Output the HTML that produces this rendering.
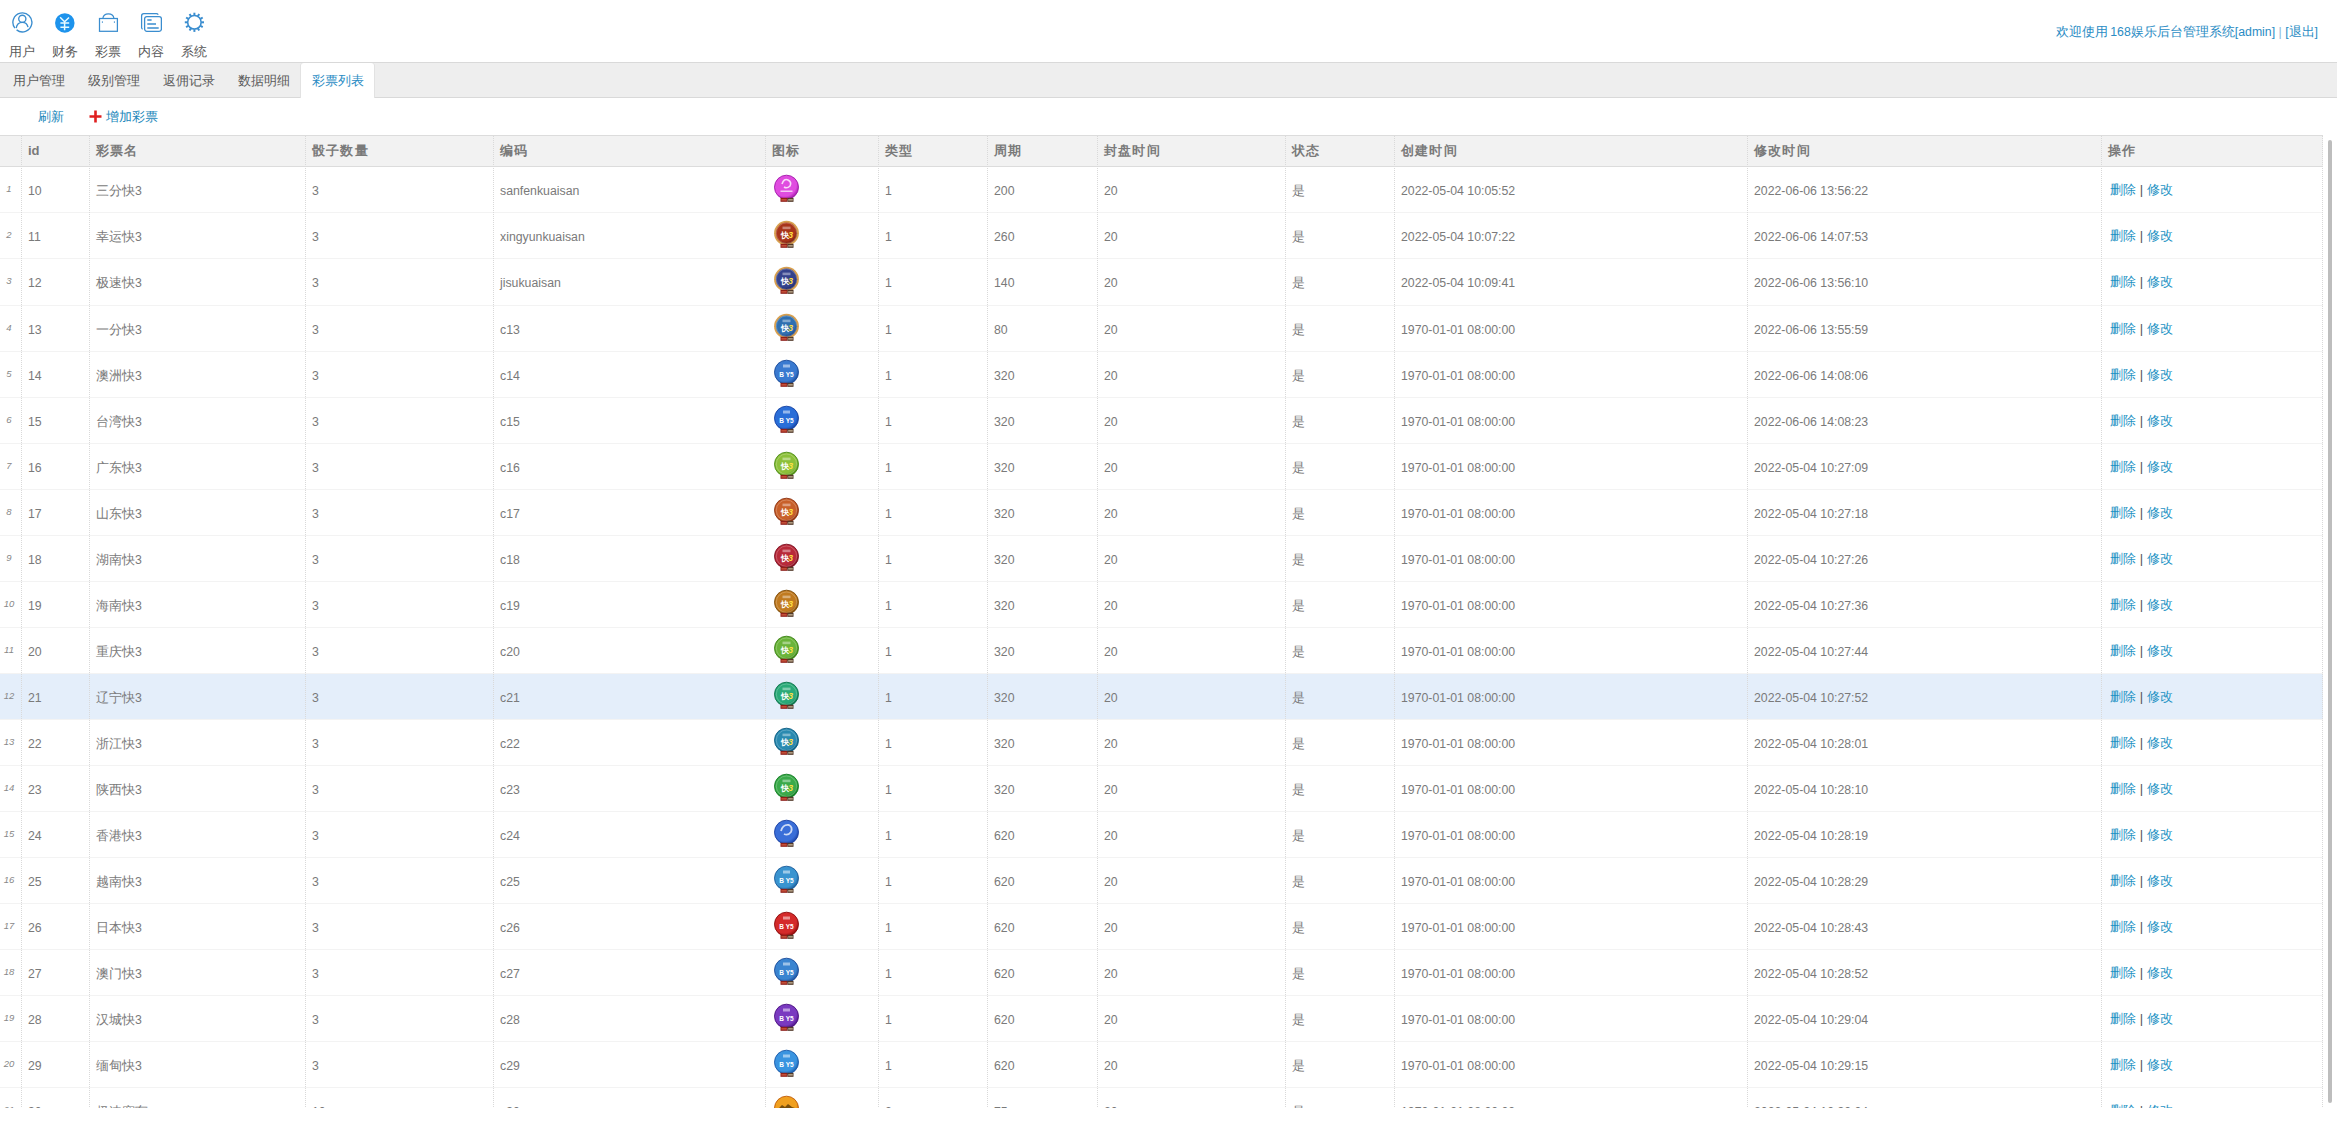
<!DOCTYPE html><html><head><meta charset="utf-8"><style>
*{margin:0;padding:0;box-sizing:border-box}
html,body{width:2337px;height:1140px;overflow:hidden;background:#fff}
body{position:relative;font-family:"Liberation Sans",sans-serif;color:#666;font-size:12px}
.a{position:absolute;white-space:nowrap}
.nav{position:absolute;top:0;width:40px;height:62px}
.nav svg{position:absolute;left:9px;top:12px}
.nav span{position:absolute;left:0;width:40px;top:44px;text-align:center;font-size:13px;color:#5a5a5a;line-height:16px}
#welcome{right:19px;top:24px;font-size:12.3px;color:#2a8cc4;line-height:16px}
#tabs{position:absolute;left:0;top:62px;width:2337px;height:36px;background:#eee;border-top:1px solid #d9d9d9;border-bottom:1px solid #d9d9d9}
.tab{position:absolute;top:10px;font-size:13px;color:#5a5a5a;line-height:16px}
#seltab{position:absolute;left:301px;top:0;width:73px;height:35px;background:#fff;border-radius:3px 3px 0 0;box-shadow:-1px 0 0 #e2e2e2,1px 0 0 #e2e2e2}
.lnk{color:#2288bb;font-size:13px;line-height:16px}
#grid{position:absolute;left:0;top:0;width:2337px;height:1108px;overflow:hidden}
.hd{position:absolute;left:0;width:2323px;background:#f2f2f2;border-top:1px solid #dcdcdc;border-bottom:1px solid #dcdcdc}
.rl{position:absolute;left:0;width:2323px;height:1px;background:#f3f3f3}
.vl{position:absolute;width:0;border-left:1px dotted #d9d9d9}
.ht{position:absolute;font-weight:bold;font-size:13px;color:#7a7a7a;line-height:16px}
.ct{position:absolute;font-size:12.3px;color:#7a7a7a;line-height:16px}
.rn{position:absolute;left:0;width:18px;text-align:center;font-style:italic;font-size:9.5px;color:#888;line-height:12px}
.op{position:absolute;font-size:13px;color:#1d92c4;line-height:16px}
.op i{font-style:normal;color:#555}
b.z{font-weight:normal;font-size:13px}
.ht b.z{font-weight:bold;letter-spacing:1.2px}
#sb{position:absolute;left:2328px;top:140px;width:4px;height:963px;background:#bdbdbd;border-radius:2px}
</style></head><body>
<div class="nav" style="left:2px"><svg width="22" height="22" viewBox="0 0 22 22"><path d="M5.6 17.9 A9.5 9.5 0 1 0 3.9 16.2" fill="none" stroke="#3a8dcf" stroke-width="1.35"/><circle cx="11.3" cy="6.8" r="3.6" fill="none" stroke="#3a8dcf" stroke-width="1.35"/><path d="M5.2 16.2 C5.8 12.6 8.2 10.4 11.3 10.4 C14.4 10.4 16.4 12.4 17 15.2" fill="none" stroke="#3a8dcf" stroke-width="1.35"/></svg><span>用户</span></div>
<div class="nav" style="left:45px"><svg width="22" height="22" viewBox="0 0 22 22"><circle cx="10.8" cy="10.9" r="9.75" fill="#1d93ec"/><path d="M6.1 5.2 L10.6 9.8 L15 5.5 M10.6 9.8 V18.3 M6.4 11.1 H15.2 M6.4 15.2 H15.2" fill="none" stroke="#e8fbff" stroke-width="1.5"/></svg><span>财务</span></div>
<div class="nav" style="left:88px"><svg width="22" height="22" viewBox="0 0 22 22"><rect x="2.5" y="6.5" width="17.9" height="12.8" fill="none" stroke="#3a8dcf" stroke-width="1.25"/><path d="M5.8 6.5 C6.8 0.4 16 0.4 17 6.5" fill="none" stroke="#3a8dcf" stroke-width="1.2"/><rect x="4.9" y="9.3" width="0.9" height="1.6" fill="#3a8dcf"/><rect x="16.9" y="9.3" width="0.9" height="1.6" fill="#3a8dcf"/></svg><span>彩票</span></div>
<div class="nav" style="left:131px"><svg width="22" height="22" viewBox="0 0 22 22"><path d="M2.6 17.2 Q1.6 16.6 1.6 15.5 V3.9 Q1.6 1.7 3.8 1.7 H16.3 Q17.6 1.7 18.3 2.6" fill="none" stroke="#3a8dcf" stroke-width="1.25"/><rect x="4.6" y="4.6" width="16.8" height="14.7" rx="2.2" fill="none" stroke="#3a8dcf" stroke-width="1.3"/><path d="M7.3 7.9 H11.6 M7.3 12 H16 M7.3 15.9 H18.7" stroke="#3a8dcf" stroke-width="1.5"/></svg><span>内容</span></div>
<div class="nav" style="left:174px"><svg width="22" height="22" viewBox="0 0 22 22"><circle cx="11.4" cy="10.3" r="6.75" fill="none" stroke="#3a8dcf" stroke-width="1.6"/><g stroke="#3a8dcf" stroke-width="2"><line x1="11.4" y1="0.7" x2="11.4" y2="3.4" transform="rotate(0 11.4 10.3)"/><line x1="11.4" y1="0.7" x2="11.4" y2="3.4" transform="rotate(30 11.4 10.3)"/><line x1="11.4" y1="0.7" x2="11.4" y2="3.4" transform="rotate(60 11.4 10.3)"/><line x1="11.4" y1="0.7" x2="11.4" y2="3.4" transform="rotate(90 11.4 10.3)"/><line x1="11.4" y1="0.7" x2="11.4" y2="3.4" transform="rotate(120 11.4 10.3)"/><line x1="11.4" y1="0.7" x2="11.4" y2="3.4" transform="rotate(150 11.4 10.3)"/><line x1="11.4" y1="0.7" x2="11.4" y2="3.4" transform="rotate(180 11.4 10.3)"/><line x1="11.4" y1="0.7" x2="11.4" y2="3.4" transform="rotate(210 11.4 10.3)"/><line x1="11.4" y1="0.7" x2="11.4" y2="3.4" transform="rotate(240 11.4 10.3)"/><line x1="11.4" y1="0.7" x2="11.4" y2="3.4" transform="rotate(270 11.4 10.3)"/><line x1="11.4" y1="0.7" x2="11.4" y2="3.4" transform="rotate(300 11.4 10.3)"/><line x1="11.4" y1="0.7" x2="11.4" y2="3.4" transform="rotate(330 11.4 10.3)"/></g></svg><span>系统</span></div>
<div class="a" id="welcome"><b class="z">欢迎使用</b>&#8201;168<b class="z">娱乐后台管理系统</b>[admin] <i style="font-style:normal;color:#8ab8d8">|</i> [<b class="z">退出</b>]</div>
<div id="tabs"><div id="seltab"></div>
<div class="tab" style="left:13px;color:#5a5a5a">用户管理</div>
<div class="tab" style="left:88px;color:#5a5a5a">级别管理</div>
<div class="tab" style="left:163px;color:#5a5a5a">返佣记录</div>
<div class="tab" style="left:238px;color:#5a5a5a">数据明细</div>
<div class="tab" style="left:312px;color:#2a8cc4">彩票列表</div>
</div>
<div class="a lnk" style="left:38px;top:109px">刷新</div>
<svg class="a" style="left:89px;top:110px" width="13" height="13" viewBox="0 0 13 13"><path d="M6.5 0.5 V12.5 M0.5 6.5 H12.5" stroke="#e02020" stroke-width="2.6"/></svg>
<div class="a lnk" style="left:106px;top:109px">增加彩票</div>
<div id="grid">
<div class="hd" style="top:135px;height:32px"></div>
<div class="a" style="left:0;top:674px;width:2323px;height:45px;background:#e4eefa"></div>
<div class="rl" style="top:212px"></div>
<div class="rl" style="top:258px"></div>
<div class="rl" style="top:305px"></div>
<div class="rl" style="top:351px"></div>
<div class="rl" style="top:397px"></div>
<div class="rl" style="top:443px"></div>
<div class="rl" style="top:489px"></div>
<div class="rl" style="top:535px"></div>
<div class="rl" style="top:581px"></div>
<div class="rl" style="top:627px"></div>
<div class="rl" style="top:673px"></div>
<div class="rl" style="top:719px"></div>
<div class="rl" style="top:765px"></div>
<div class="rl" style="top:811px"></div>
<div class="rl" style="top:857px"></div>
<div class="rl" style="top:903px"></div>
<div class="rl" style="top:949px"></div>
<div class="rl" style="top:995px"></div>
<div class="rl" style="top:1041px"></div>
<div class="rl" style="top:1087px"></div>
<div class="rl" style="top:1133px"></div>
<div class="vl" style="left:21px;top:136px;height:973px"></div>
<div class="vl" style="left:89px;top:136px;height:973px"></div>
<div class="vl" style="left:305px;top:136px;height:973px"></div>
<div class="vl" style="left:493px;top:136px;height:973px"></div>
<div class="vl" style="left:765px;top:136px;height:973px"></div>
<div class="vl" style="left:878px;top:136px;height:973px"></div>
<div class="vl" style="left:987px;top:136px;height:973px"></div>
<div class="vl" style="left:1097px;top:136px;height:973px"></div>
<div class="vl" style="left:1285px;top:136px;height:973px"></div>
<div class="vl" style="left:1394px;top:136px;height:973px"></div>
<div class="vl" style="left:1747px;top:136px;height:973px"></div>
<div class="vl" style="left:2101px;top:136px;height:973px"></div>
<div class="vl" style="left:2322px;top:136px;height:973px"></div>
<div class="ht" style="left:28px;top:143px">id</div>
<div class="ht" style="left:96px;top:143px"><b class="z">彩票名</b></div>
<div class="ht" style="left:312px;top:143px"><b class="z">骰子数量</b></div>
<div class="ht" style="left:500px;top:143px"><b class="z">编码</b></div>
<div class="ht" style="left:772px;top:143px"><b class="z">图标</b></div>
<div class="ht" style="left:885px;top:143px"><b class="z">类型</b></div>
<div class="ht" style="left:994px;top:143px"><b class="z">周期</b></div>
<div class="ht" style="left:1104px;top:143px"><b class="z">封盘时间</b></div>
<div class="ht" style="left:1292px;top:143px"><b class="z">状态</b></div>
<div class="ht" style="left:1401px;top:143px"><b class="z">创建时间</b></div>
<div class="ht" style="left:1754px;top:143px"><b class="z">修改时间</b></div>
<div class="ht" style="left:2108px;top:143px"><b class="z">操作</b></div>
<div class="rn" style="top:183px">1</div>
<div class="ct" style="left:28px;top:183px">10</div>
<div class="ct" style="left:96px;top:183px"><b class="z">三分快</b>3</div>
<div class="ct" style="left:312px;top:183px">3</div>
<div class="ct" style="left:500px;top:183px">sanfenkuaisan</div>
<div class="a" style="left:772px;top:174px;line-height:0"><svg width="30" height="30" viewBox="0 0 30 30"><defs><radialGradient id="g0" cx="0.42" cy="0.38" r="0.65"><stop offset="0" stop-color="#e04ce0"/><stop offset="0.75" stop-color="#e04ce0"/><stop offset="1" stop-color="#a018a8"/></radialGradient></defs><circle cx="14.5" cy="13.2" r="12" fill="url(#g0)" stroke="#a018a8" stroke-width="0.9"/><path d="M10 10 Q12 4 16 6 Q20 8 18 12 Q15 15 12 13" fill="none" stroke="#fff" stroke-width="1.6" opacity="0.8"/><rect x="8.5" y="16.5" width="12" height="1.5" fill="#fff" opacity="0.7"/><rect x="8.5" y="23.8" width="7" height="4" fill="#8a1a14"/><rect x="15.5" y="23.8" width="6" height="4" fill="#4a3020"/><rect x="9.3" y="24.9" width="5.4" height="1.8" fill="#e87050" opacity="0.6"/><rect x="16.2" y="24.9" width="4.6" height="1.8" fill="#f0e0c0" opacity="0.6"/></svg></div>
<div class="ct" style="left:885px;top:183px">1</div>
<div class="ct" style="left:994px;top:183px">200</div>
<div class="ct" style="left:1104px;top:183px">20</div>
<div class="ct" style="left:1292px;top:183px"><b class="z">是</b></div>
<div class="ct" style="left:1401px;top:183px">2022-05-04 10:05:52</div>
<div class="ct" style="left:1754px;top:183px">2022-06-06 13:56:22</div>
<div class="op" style="left:2110px;top:182px">删除 <i>|</i> 修改</div>
<div class="rn" style="top:229px">2</div>
<div class="ct" style="left:28px;top:229px">11</div>
<div class="ct" style="left:96px;top:229px"><b class="z">幸运快</b>3</div>
<div class="ct" style="left:312px;top:229px">3</div>
<div class="ct" style="left:500px;top:229px">xingyunkuaisan</div>
<div class="a" style="left:772px;top:220px;line-height:0"><svg width="30" height="30" viewBox="0 0 30 30"><defs><radialGradient id="g1" cx="0.42" cy="0.38" r="0.65"><stop offset="0" stop-color="#a8341a"/><stop offset="0.75" stop-color="#a8341a"/><stop offset="1" stop-color="#6a1a08"/></radialGradient></defs><circle cx="14.5" cy="13.2" r="12.4" fill="#d8a050"/><circle cx="14.5" cy="13.2" r="10.6" fill="url(#g1)"/><rect x="10.5" y="6.6" width="8" height="2.6" fill="#fff" opacity="0.4"/><circle cx="14.5" cy="13.2" r="10.2" fill="none" stroke="#fff" stroke-width="0.5" opacity="0.45"/><text x="9" y="17.6" font-family="Liberation Sans" font-weight="bold" font-size="8" fill="#fff">快</text><text x="16.2" y="18" font-family="Liberation Sans" font-weight="bold" font-style="italic" font-size="8.5" fill="#ffe040">3</text><rect x="8.5" y="23.8" width="7" height="4" fill="#8a1a14"/><rect x="15.5" y="23.8" width="6" height="4" fill="#4a3020"/><rect x="9.3" y="24.9" width="5.4" height="1.8" fill="#e87050" opacity="0.6"/><rect x="16.2" y="24.9" width="4.6" height="1.8" fill="#f0e0c0" opacity="0.6"/></svg></div>
<div class="ct" style="left:885px;top:229px">1</div>
<div class="ct" style="left:994px;top:229px">260</div>
<div class="ct" style="left:1104px;top:229px">20</div>
<div class="ct" style="left:1292px;top:229px"><b class="z">是</b></div>
<div class="ct" style="left:1401px;top:229px">2022-05-04 10:07:22</div>
<div class="ct" style="left:1754px;top:229px">2022-06-06 14:07:53</div>
<div class="op" style="left:2110px;top:228px">删除 <i>|</i> 修改</div>
<div class="rn" style="top:275px">3</div>
<div class="ct" style="left:28px;top:275px">12</div>
<div class="ct" style="left:96px;top:275px"><b class="z">极速快</b>3</div>
<div class="ct" style="left:312px;top:275px">3</div>
<div class="ct" style="left:500px;top:275px">jisukuaisan</div>
<div class="a" style="left:772px;top:266px;line-height:0"><svg width="30" height="30" viewBox="0 0 30 30"><defs><radialGradient id="g2" cx="0.42" cy="0.38" r="0.65"><stop offset="0" stop-color="#34428c"/><stop offset="0.75" stop-color="#34428c"/><stop offset="1" stop-color="#1a2058"/></radialGradient></defs><circle cx="14.5" cy="13.2" r="12.4" fill="#d8a050"/><circle cx="14.5" cy="13.2" r="10.6" fill="url(#g2)"/><rect x="10.5" y="6.6" width="8" height="2.6" fill="#fff" opacity="0.4"/><circle cx="14.5" cy="13.2" r="10.2" fill="none" stroke="#fff" stroke-width="0.5" opacity="0.45"/><text x="9" y="17.6" font-family="Liberation Sans" font-weight="bold" font-size="8" fill="#fff">快</text><text x="16.2" y="18" font-family="Liberation Sans" font-weight="bold" font-style="italic" font-size="8.5" fill="#ffe040">3</text><rect x="8.5" y="23.8" width="7" height="4" fill="#8a1a14"/><rect x="15.5" y="23.8" width="6" height="4" fill="#4a3020"/><rect x="9.3" y="24.9" width="5.4" height="1.8" fill="#e87050" opacity="0.6"/><rect x="16.2" y="24.9" width="4.6" height="1.8" fill="#f0e0c0" opacity="0.6"/></svg></div>
<div class="ct" style="left:885px;top:275px">1</div>
<div class="ct" style="left:994px;top:275px">140</div>
<div class="ct" style="left:1104px;top:275px">20</div>
<div class="ct" style="left:1292px;top:275px"><b class="z">是</b></div>
<div class="ct" style="left:1401px;top:275px">2022-05-04 10:09:41</div>
<div class="ct" style="left:1754px;top:275px">2022-06-06 13:56:10</div>
<div class="op" style="left:2110px;top:274px">删除 <i>|</i> 修改</div>
<div class="rn" style="top:322px">4</div>
<div class="ct" style="left:28px;top:322px">13</div>
<div class="ct" style="left:96px;top:322px"><b class="z">一分快</b>3</div>
<div class="ct" style="left:312px;top:322px">3</div>
<div class="ct" style="left:500px;top:322px">c13</div>
<div class="a" style="left:772px;top:313px;line-height:0"><svg width="30" height="30" viewBox="0 0 30 30"><defs><radialGradient id="g3" cx="0.42" cy="0.38" r="0.65"><stop offset="0" stop-color="#2f6fb0"/><stop offset="0.75" stop-color="#2f6fb0"/><stop offset="1" stop-color="#1a3a78"/></radialGradient></defs><circle cx="14.5" cy="13.2" r="12.4" fill="#d8a050"/><circle cx="14.5" cy="13.2" r="10.6" fill="url(#g3)"/><rect x="10.5" y="6.6" width="8" height="2.6" fill="#fff" opacity="0.4"/><circle cx="14.5" cy="13.2" r="10.2" fill="none" stroke="#fff" stroke-width="0.5" opacity="0.45"/><text x="9" y="17.6" font-family="Liberation Sans" font-weight="bold" font-size="8" fill="#fff">快</text><text x="16.2" y="18" font-family="Liberation Sans" font-weight="bold" font-style="italic" font-size="8.5" fill="#ffe040">3</text><rect x="8.5" y="23.8" width="7" height="4" fill="#8a1a14"/><rect x="15.5" y="23.8" width="6" height="4" fill="#4a3020"/><rect x="9.3" y="24.9" width="5.4" height="1.8" fill="#e87050" opacity="0.6"/><rect x="16.2" y="24.9" width="4.6" height="1.8" fill="#f0e0c0" opacity="0.6"/></svg></div>
<div class="ct" style="left:885px;top:322px">1</div>
<div class="ct" style="left:994px;top:322px">80</div>
<div class="ct" style="left:1104px;top:322px">20</div>
<div class="ct" style="left:1292px;top:322px"><b class="z">是</b></div>
<div class="ct" style="left:1401px;top:322px">1970-01-01 08:00:00</div>
<div class="ct" style="left:1754px;top:322px">2022-06-06 13:55:59</div>
<div class="op" style="left:2110px;top:321px">删除 <i>|</i> 修改</div>
<div class="rn" style="top:368px">5</div>
<div class="ct" style="left:28px;top:368px">14</div>
<div class="ct" style="left:96px;top:368px"><b class="z">澳洲快</b>3</div>
<div class="ct" style="left:312px;top:368px">3</div>
<div class="ct" style="left:500px;top:368px">c14</div>
<div class="a" style="left:772px;top:359px;line-height:0"><svg width="30" height="30" viewBox="0 0 30 30"><defs><radialGradient id="g4" cx="0.42" cy="0.38" r="0.65"><stop offset="0" stop-color="#3a7ad0"/><stop offset="0.75" stop-color="#3a7ad0"/><stop offset="1" stop-color="#1a4a98"/></radialGradient></defs><circle cx="14.5" cy="13.2" r="12" fill="url(#g4)" stroke="#1a4a98" stroke-width="0.9"/><rect x="11" y="5.5" width="7" height="3" fill="#fff" opacity="0.5"/><text x="14.5" y="17.8" text-anchor="middle" font-family="Liberation Sans" font-weight="bold" font-size="6.5" fill="#fff">B Y5</text><rect x="8.5" y="23.8" width="7" height="4" fill="#8a1a14"/><rect x="15.5" y="23.8" width="6" height="4" fill="#4a3020"/><rect x="9.3" y="24.9" width="5.4" height="1.8" fill="#e87050" opacity="0.6"/><rect x="16.2" y="24.9" width="4.6" height="1.8" fill="#f0e0c0" opacity="0.6"/></svg></div>
<div class="ct" style="left:885px;top:368px">1</div>
<div class="ct" style="left:994px;top:368px">320</div>
<div class="ct" style="left:1104px;top:368px">20</div>
<div class="ct" style="left:1292px;top:368px"><b class="z">是</b></div>
<div class="ct" style="left:1401px;top:368px">1970-01-01 08:00:00</div>
<div class="ct" style="left:1754px;top:368px">2022-06-06 14:08:06</div>
<div class="op" style="left:2110px;top:367px">删除 <i>|</i> 修改</div>
<div class="rn" style="top:414px">6</div>
<div class="ct" style="left:28px;top:414px">15</div>
<div class="ct" style="left:96px;top:414px"><b class="z">台湾快</b>3</div>
<div class="ct" style="left:312px;top:414px">3</div>
<div class="ct" style="left:500px;top:414px">c15</div>
<div class="a" style="left:772px;top:405px;line-height:0"><svg width="30" height="30" viewBox="0 0 30 30"><defs><radialGradient id="g5" cx="0.42" cy="0.38" r="0.65"><stop offset="0" stop-color="#2a6ed8"/><stop offset="0.75" stop-color="#2a6ed8"/><stop offset="1" stop-color="#1440a0"/></radialGradient></defs><circle cx="14.5" cy="13.2" r="12" fill="url(#g5)" stroke="#1440a0" stroke-width="0.9"/><rect x="11" y="5.5" width="7" height="3" fill="#fff" opacity="0.5"/><text x="14.5" y="17.8" text-anchor="middle" font-family="Liberation Sans" font-weight="bold" font-size="6.5" fill="#fff">B Y5</text><rect x="8.5" y="23.8" width="7" height="4" fill="#8a1a14"/><rect x="15.5" y="23.8" width="6" height="4" fill="#4a3020"/><rect x="9.3" y="24.9" width="5.4" height="1.8" fill="#e87050" opacity="0.6"/><rect x="16.2" y="24.9" width="4.6" height="1.8" fill="#f0e0c0" opacity="0.6"/></svg></div>
<div class="ct" style="left:885px;top:414px">1</div>
<div class="ct" style="left:994px;top:414px">320</div>
<div class="ct" style="left:1104px;top:414px">20</div>
<div class="ct" style="left:1292px;top:414px"><b class="z">是</b></div>
<div class="ct" style="left:1401px;top:414px">1970-01-01 08:00:00</div>
<div class="ct" style="left:1754px;top:414px">2022-06-06 14:08:23</div>
<div class="op" style="left:2110px;top:413px">删除 <i>|</i> 修改</div>
<div class="rn" style="top:460px">7</div>
<div class="ct" style="left:28px;top:460px">16</div>
<div class="ct" style="left:96px;top:460px"><b class="z">广东快</b>3</div>
<div class="ct" style="left:312px;top:460px">3</div>
<div class="ct" style="left:500px;top:460px">c16</div>
<div class="a" style="left:772px;top:451px;line-height:0"><svg width="30" height="30" viewBox="0 0 30 30"><defs><radialGradient id="g6" cx="0.42" cy="0.38" r="0.65"><stop offset="0" stop-color="#8cc03a"/><stop offset="0.75" stop-color="#8cc03a"/><stop offset="1" stop-color="#4a8a14"/></radialGradient></defs><circle cx="14.5" cy="13.2" r="12" fill="url(#g6)" stroke="#4a8a14" stroke-width="0.9"/><rect x="10.5" y="6.6" width="8" height="2.6" fill="#fff" opacity="0.4"/><circle cx="14.5" cy="13.2" r="10.2" fill="none" stroke="#fff" stroke-width="0.5" opacity="0.45"/><text x="9" y="17.6" font-family="Liberation Sans" font-weight="bold" font-size="8" fill="#fff">快</text><text x="16.2" y="18" font-family="Liberation Sans" font-weight="bold" font-style="italic" font-size="8.5" fill="#ffe040">3</text><rect x="8.5" y="23.8" width="7" height="4" fill="#8a1a14"/><rect x="15.5" y="23.8" width="6" height="4" fill="#4a3020"/><rect x="9.3" y="24.9" width="5.4" height="1.8" fill="#e87050" opacity="0.6"/><rect x="16.2" y="24.9" width="4.6" height="1.8" fill="#f0e0c0" opacity="0.6"/></svg></div>
<div class="ct" style="left:885px;top:460px">1</div>
<div class="ct" style="left:994px;top:460px">320</div>
<div class="ct" style="left:1104px;top:460px">20</div>
<div class="ct" style="left:1292px;top:460px"><b class="z">是</b></div>
<div class="ct" style="left:1401px;top:460px">1970-01-01 08:00:00</div>
<div class="ct" style="left:1754px;top:460px">2022-05-04 10:27:09</div>
<div class="op" style="left:2110px;top:459px">删除 <i>|</i> 修改</div>
<div class="rn" style="top:506px">8</div>
<div class="ct" style="left:28px;top:506px">17</div>
<div class="ct" style="left:96px;top:506px"><b class="z">山东快</b>3</div>
<div class="ct" style="left:312px;top:506px">3</div>
<div class="ct" style="left:500px;top:506px">c17</div>
<div class="a" style="left:772px;top:497px;line-height:0"><svg width="30" height="30" viewBox="0 0 30 30"><defs><radialGradient id="g7" cx="0.42" cy="0.38" r="0.65"><stop offset="0" stop-color="#c8602a"/><stop offset="0.75" stop-color="#c8602a"/><stop offset="1" stop-color="#8a3010"/></radialGradient></defs><circle cx="14.5" cy="13.2" r="12" fill="url(#g7)" stroke="#8a3010" stroke-width="0.9"/><rect x="10.5" y="6.6" width="8" height="2.6" fill="#fff" opacity="0.4"/><circle cx="14.5" cy="13.2" r="10.2" fill="none" stroke="#fff" stroke-width="0.5" opacity="0.45"/><text x="9" y="17.6" font-family="Liberation Sans" font-weight="bold" font-size="8" fill="#fff">快</text><text x="16.2" y="18" font-family="Liberation Sans" font-weight="bold" font-style="italic" font-size="8.5" fill="#ffe040">3</text><rect x="8.5" y="23.8" width="7" height="4" fill="#8a1a14"/><rect x="15.5" y="23.8" width="6" height="4" fill="#4a3020"/><rect x="9.3" y="24.9" width="5.4" height="1.8" fill="#e87050" opacity="0.6"/><rect x="16.2" y="24.9" width="4.6" height="1.8" fill="#f0e0c0" opacity="0.6"/></svg></div>
<div class="ct" style="left:885px;top:506px">1</div>
<div class="ct" style="left:994px;top:506px">320</div>
<div class="ct" style="left:1104px;top:506px">20</div>
<div class="ct" style="left:1292px;top:506px"><b class="z">是</b></div>
<div class="ct" style="left:1401px;top:506px">1970-01-01 08:00:00</div>
<div class="ct" style="left:1754px;top:506px">2022-05-04 10:27:18</div>
<div class="op" style="left:2110px;top:505px">删除 <i>|</i> 修改</div>
<div class="rn" style="top:552px">9</div>
<div class="ct" style="left:28px;top:552px">18</div>
<div class="ct" style="left:96px;top:552px"><b class="z">湖南快</b>3</div>
<div class="ct" style="left:312px;top:552px">3</div>
<div class="ct" style="left:500px;top:552px">c18</div>
<div class="a" style="left:772px;top:543px;line-height:0"><svg width="30" height="30" viewBox="0 0 30 30"><defs><radialGradient id="g8" cx="0.42" cy="0.38" r="0.65"><stop offset="0" stop-color="#b82a3a"/><stop offset="0.75" stop-color="#b82a3a"/><stop offset="1" stop-color="#7a1020"/></radialGradient></defs><circle cx="14.5" cy="13.2" r="12" fill="url(#g8)" stroke="#7a1020" stroke-width="0.9"/><rect x="10.5" y="6.6" width="8" height="2.6" fill="#fff" opacity="0.4"/><circle cx="14.5" cy="13.2" r="10.2" fill="none" stroke="#fff" stroke-width="0.5" opacity="0.45"/><text x="9" y="17.6" font-family="Liberation Sans" font-weight="bold" font-size="8" fill="#fff">快</text><text x="16.2" y="18" font-family="Liberation Sans" font-weight="bold" font-style="italic" font-size="8.5" fill="#ffe040">3</text><rect x="8.5" y="23.8" width="7" height="4" fill="#8a1a14"/><rect x="15.5" y="23.8" width="6" height="4" fill="#4a3020"/><rect x="9.3" y="24.9" width="5.4" height="1.8" fill="#e87050" opacity="0.6"/><rect x="16.2" y="24.9" width="4.6" height="1.8" fill="#f0e0c0" opacity="0.6"/></svg></div>
<div class="ct" style="left:885px;top:552px">1</div>
<div class="ct" style="left:994px;top:552px">320</div>
<div class="ct" style="left:1104px;top:552px">20</div>
<div class="ct" style="left:1292px;top:552px"><b class="z">是</b></div>
<div class="ct" style="left:1401px;top:552px">1970-01-01 08:00:00</div>
<div class="ct" style="left:1754px;top:552px">2022-05-04 10:27:26</div>
<div class="op" style="left:2110px;top:551px">删除 <i>|</i> 修改</div>
<div class="rn" style="top:598px">10</div>
<div class="ct" style="left:28px;top:598px">19</div>
<div class="ct" style="left:96px;top:598px"><b class="z">海南快</b>3</div>
<div class="ct" style="left:312px;top:598px">3</div>
<div class="ct" style="left:500px;top:598px">c19</div>
<div class="a" style="left:772px;top:589px;line-height:0"><svg width="30" height="30" viewBox="0 0 30 30"><defs><radialGradient id="g9" cx="0.42" cy="0.38" r="0.65"><stop offset="0" stop-color="#c07a20"/><stop offset="0.75" stop-color="#c07a20"/><stop offset="1" stop-color="#7a4a08"/></radialGradient></defs><circle cx="14.5" cy="13.2" r="12" fill="url(#g9)" stroke="#7a4a08" stroke-width="0.9"/><rect x="10.5" y="6.6" width="8" height="2.6" fill="#fff" opacity="0.4"/><circle cx="14.5" cy="13.2" r="10.2" fill="none" stroke="#fff" stroke-width="0.5" opacity="0.45"/><text x="9" y="17.6" font-family="Liberation Sans" font-weight="bold" font-size="8" fill="#fff">快</text><text x="16.2" y="18" font-family="Liberation Sans" font-weight="bold" font-style="italic" font-size="8.5" fill="#ffe040">3</text><rect x="8.5" y="23.8" width="7" height="4" fill="#8a1a14"/><rect x="15.5" y="23.8" width="6" height="4" fill="#4a3020"/><rect x="9.3" y="24.9" width="5.4" height="1.8" fill="#e87050" opacity="0.6"/><rect x="16.2" y="24.9" width="4.6" height="1.8" fill="#f0e0c0" opacity="0.6"/></svg></div>
<div class="ct" style="left:885px;top:598px">1</div>
<div class="ct" style="left:994px;top:598px">320</div>
<div class="ct" style="left:1104px;top:598px">20</div>
<div class="ct" style="left:1292px;top:598px"><b class="z">是</b></div>
<div class="ct" style="left:1401px;top:598px">1970-01-01 08:00:00</div>
<div class="ct" style="left:1754px;top:598px">2022-05-04 10:27:36</div>
<div class="op" style="left:2110px;top:597px">删除 <i>|</i> 修改</div>
<div class="rn" style="top:644px">11</div>
<div class="ct" style="left:28px;top:644px">20</div>
<div class="ct" style="left:96px;top:644px"><b class="z">重庆快</b>3</div>
<div class="ct" style="left:312px;top:644px">3</div>
<div class="ct" style="left:500px;top:644px">c20</div>
<div class="a" style="left:772px;top:635px;line-height:0"><svg width="30" height="30" viewBox="0 0 30 30"><defs><radialGradient id="g10" cx="0.42" cy="0.38" r="0.65"><stop offset="0" stop-color="#6ab43a"/><stop offset="0.75" stop-color="#6ab43a"/><stop offset="1" stop-color="#3a8014"/></radialGradient></defs><circle cx="14.5" cy="13.2" r="12" fill="url(#g10)" stroke="#3a8014" stroke-width="0.9"/><rect x="10.5" y="6.6" width="8" height="2.6" fill="#fff" opacity="0.4"/><circle cx="14.5" cy="13.2" r="10.2" fill="none" stroke="#fff" stroke-width="0.5" opacity="0.45"/><text x="9" y="17.6" font-family="Liberation Sans" font-weight="bold" font-size="8" fill="#fff">快</text><text x="16.2" y="18" font-family="Liberation Sans" font-weight="bold" font-style="italic" font-size="8.5" fill="#ffe040">3</text><rect x="8.5" y="23.8" width="7" height="4" fill="#8a1a14"/><rect x="15.5" y="23.8" width="6" height="4" fill="#4a3020"/><rect x="9.3" y="24.9" width="5.4" height="1.8" fill="#e87050" opacity="0.6"/><rect x="16.2" y="24.9" width="4.6" height="1.8" fill="#f0e0c0" opacity="0.6"/></svg></div>
<div class="ct" style="left:885px;top:644px">1</div>
<div class="ct" style="left:994px;top:644px">320</div>
<div class="ct" style="left:1104px;top:644px">20</div>
<div class="ct" style="left:1292px;top:644px"><b class="z">是</b></div>
<div class="ct" style="left:1401px;top:644px">1970-01-01 08:00:00</div>
<div class="ct" style="left:1754px;top:644px">2022-05-04 10:27:44</div>
<div class="op" style="left:2110px;top:643px">删除 <i>|</i> 修改</div>
<div class="rn" style="top:690px">12</div>
<div class="ct" style="left:28px;top:690px">21</div>
<div class="ct" style="left:96px;top:690px"><b class="z">辽宁快</b>3</div>
<div class="ct" style="left:312px;top:690px">3</div>
<div class="ct" style="left:500px;top:690px">c21</div>
<div class="a" style="left:772px;top:681px;line-height:0"><svg width="30" height="30" viewBox="0 0 30 30"><defs><radialGradient id="g11" cx="0.42" cy="0.38" r="0.65"><stop offset="0" stop-color="#2aaa78"/><stop offset="0.75" stop-color="#2aaa78"/><stop offset="1" stop-color="#0a7048"/></radialGradient></defs><circle cx="14.5" cy="13.2" r="12" fill="url(#g11)" stroke="#0a7048" stroke-width="0.9"/><rect x="10.5" y="6.6" width="8" height="2.6" fill="#fff" opacity="0.4"/><circle cx="14.5" cy="13.2" r="10.2" fill="none" stroke="#fff" stroke-width="0.5" opacity="0.45"/><text x="9" y="17.6" font-family="Liberation Sans" font-weight="bold" font-size="8" fill="#fff">快</text><text x="16.2" y="18" font-family="Liberation Sans" font-weight="bold" font-style="italic" font-size="8.5" fill="#ffe040">3</text><rect x="8.5" y="23.8" width="7" height="4" fill="#8a1a14"/><rect x="15.5" y="23.8" width="6" height="4" fill="#4a3020"/><rect x="9.3" y="24.9" width="5.4" height="1.8" fill="#e87050" opacity="0.6"/><rect x="16.2" y="24.9" width="4.6" height="1.8" fill="#f0e0c0" opacity="0.6"/></svg></div>
<div class="ct" style="left:885px;top:690px">1</div>
<div class="ct" style="left:994px;top:690px">320</div>
<div class="ct" style="left:1104px;top:690px">20</div>
<div class="ct" style="left:1292px;top:690px"><b class="z">是</b></div>
<div class="ct" style="left:1401px;top:690px">1970-01-01 08:00:00</div>
<div class="ct" style="left:1754px;top:690px">2022-05-04 10:27:52</div>
<div class="op" style="left:2110px;top:689px">删除 <i>|</i> 修改</div>
<div class="rn" style="top:736px">13</div>
<div class="ct" style="left:28px;top:736px">22</div>
<div class="ct" style="left:96px;top:736px"><b class="z">浙江快</b>3</div>
<div class="ct" style="left:312px;top:736px">3</div>
<div class="ct" style="left:500px;top:736px">c22</div>
<div class="a" style="left:772px;top:727px;line-height:0"><svg width="30" height="30" viewBox="0 0 30 30"><defs><radialGradient id="g12" cx="0.42" cy="0.38" r="0.65"><stop offset="0" stop-color="#2a8ab0"/><stop offset="0.75" stop-color="#2a8ab0"/><stop offset="1" stop-color="#0a5a80"/></radialGradient></defs><circle cx="14.5" cy="13.2" r="12" fill="url(#g12)" stroke="#0a5a80" stroke-width="0.9"/><rect x="10.5" y="6.6" width="8" height="2.6" fill="#fff" opacity="0.4"/><circle cx="14.5" cy="13.2" r="10.2" fill="none" stroke="#fff" stroke-width="0.5" opacity="0.45"/><text x="9" y="17.6" font-family="Liberation Sans" font-weight="bold" font-size="8" fill="#fff">快</text><text x="16.2" y="18" font-family="Liberation Sans" font-weight="bold" font-style="italic" font-size="8.5" fill="#ffe040">3</text><rect x="8.5" y="23.8" width="7" height="4" fill="#8a1a14"/><rect x="15.5" y="23.8" width="6" height="4" fill="#4a3020"/><rect x="9.3" y="24.9" width="5.4" height="1.8" fill="#e87050" opacity="0.6"/><rect x="16.2" y="24.9" width="4.6" height="1.8" fill="#f0e0c0" opacity="0.6"/></svg></div>
<div class="ct" style="left:885px;top:736px">1</div>
<div class="ct" style="left:994px;top:736px">320</div>
<div class="ct" style="left:1104px;top:736px">20</div>
<div class="ct" style="left:1292px;top:736px"><b class="z">是</b></div>
<div class="ct" style="left:1401px;top:736px">1970-01-01 08:00:00</div>
<div class="ct" style="left:1754px;top:736px">2022-05-04 10:28:01</div>
<div class="op" style="left:2110px;top:735px">删除 <i>|</i> 修改</div>
<div class="rn" style="top:782px">14</div>
<div class="ct" style="left:28px;top:782px">23</div>
<div class="ct" style="left:96px;top:782px"><b class="z">陕西快</b>3</div>
<div class="ct" style="left:312px;top:782px">3</div>
<div class="ct" style="left:500px;top:782px">c23</div>
<div class="a" style="left:772px;top:773px;line-height:0"><svg width="30" height="30" viewBox="0 0 30 30"><defs><radialGradient id="g13" cx="0.42" cy="0.38" r="0.65"><stop offset="0" stop-color="#3aaa4a"/><stop offset="0.75" stop-color="#3aaa4a"/><stop offset="1" stop-color="#107a20"/></radialGradient></defs><circle cx="14.5" cy="13.2" r="12" fill="url(#g13)" stroke="#107a20" stroke-width="0.9"/><rect x="10.5" y="6.6" width="8" height="2.6" fill="#fff" opacity="0.4"/><circle cx="14.5" cy="13.2" r="10.2" fill="none" stroke="#fff" stroke-width="0.5" opacity="0.45"/><text x="9" y="17.6" font-family="Liberation Sans" font-weight="bold" font-size="8" fill="#fff">快</text><text x="16.2" y="18" font-family="Liberation Sans" font-weight="bold" font-style="italic" font-size="8.5" fill="#ffe040">3</text><rect x="8.5" y="23.8" width="7" height="4" fill="#8a1a14"/><rect x="15.5" y="23.8" width="6" height="4" fill="#4a3020"/><rect x="9.3" y="24.9" width="5.4" height="1.8" fill="#e87050" opacity="0.6"/><rect x="16.2" y="24.9" width="4.6" height="1.8" fill="#f0e0c0" opacity="0.6"/></svg></div>
<div class="ct" style="left:885px;top:782px">1</div>
<div class="ct" style="left:994px;top:782px">320</div>
<div class="ct" style="left:1104px;top:782px">20</div>
<div class="ct" style="left:1292px;top:782px"><b class="z">是</b></div>
<div class="ct" style="left:1401px;top:782px">1970-01-01 08:00:00</div>
<div class="ct" style="left:1754px;top:782px">2022-05-04 10:28:10</div>
<div class="op" style="left:2110px;top:781px">删除 <i>|</i> 修改</div>
<div class="rn" style="top:828px">15</div>
<div class="ct" style="left:28px;top:828px">24</div>
<div class="ct" style="left:96px;top:828px"><b class="z">香港快</b>3</div>
<div class="ct" style="left:312px;top:828px">3</div>
<div class="ct" style="left:500px;top:828px">c24</div>
<div class="a" style="left:772px;top:819px;line-height:0"><svg width="30" height="30" viewBox="0 0 30 30"><defs><radialGradient id="g14" cx="0.42" cy="0.38" r="0.65"><stop offset="0" stop-color="#3a6ed8"/><stop offset="0.75" stop-color="#3a6ed8"/><stop offset="1" stop-color="#1a3ea0"/></radialGradient></defs><circle cx="14.5" cy="13.2" r="12" fill="url(#g14)" stroke="#1a3ea0" stroke-width="0.9"/><path d="M9 12 Q11 5 17 6 Q21 8 19 13 Q16 17 12 15" fill="none" stroke="#fff" stroke-width="1.8" opacity="0.75"/><rect x="8.5" y="23.8" width="7" height="4" fill="#8a1a14"/><rect x="15.5" y="23.8" width="6" height="4" fill="#4a3020"/><rect x="9.3" y="24.9" width="5.4" height="1.8" fill="#e87050" opacity="0.6"/><rect x="16.2" y="24.9" width="4.6" height="1.8" fill="#f0e0c0" opacity="0.6"/></svg></div>
<div class="ct" style="left:885px;top:828px">1</div>
<div class="ct" style="left:994px;top:828px">620</div>
<div class="ct" style="left:1104px;top:828px">20</div>
<div class="ct" style="left:1292px;top:828px"><b class="z">是</b></div>
<div class="ct" style="left:1401px;top:828px">1970-01-01 08:00:00</div>
<div class="ct" style="left:1754px;top:828px">2022-05-04 10:28:19</div>
<div class="op" style="left:2110px;top:827px">删除 <i>|</i> 修改</div>
<div class="rn" style="top:874px">16</div>
<div class="ct" style="left:28px;top:874px">25</div>
<div class="ct" style="left:96px;top:874px"><b class="z">越南快</b>3</div>
<div class="ct" style="left:312px;top:874px">3</div>
<div class="ct" style="left:500px;top:874px">c25</div>
<div class="a" style="left:772px;top:865px;line-height:0"><svg width="30" height="30" viewBox="0 0 30 30"><defs><radialGradient id="g15" cx="0.42" cy="0.38" r="0.65"><stop offset="0" stop-color="#3a94d0"/><stop offset="0.75" stop-color="#3a94d0"/><stop offset="1" stop-color="#1a5a98"/></radialGradient></defs><circle cx="14.5" cy="13.2" r="12" fill="url(#g15)" stroke="#1a5a98" stroke-width="0.9"/><rect x="11" y="5.5" width="7" height="3" fill="#fff" opacity="0.5"/><text x="14.5" y="17.8" text-anchor="middle" font-family="Liberation Sans" font-weight="bold" font-size="6.5" fill="#fff">B Y5</text><rect x="8.5" y="23.8" width="7" height="4" fill="#8a1a14"/><rect x="15.5" y="23.8" width="6" height="4" fill="#4a3020"/><rect x="9.3" y="24.9" width="5.4" height="1.8" fill="#e87050" opacity="0.6"/><rect x="16.2" y="24.9" width="4.6" height="1.8" fill="#f0e0c0" opacity="0.6"/></svg></div>
<div class="ct" style="left:885px;top:874px">1</div>
<div class="ct" style="left:994px;top:874px">620</div>
<div class="ct" style="left:1104px;top:874px">20</div>
<div class="ct" style="left:1292px;top:874px"><b class="z">是</b></div>
<div class="ct" style="left:1401px;top:874px">1970-01-01 08:00:00</div>
<div class="ct" style="left:1754px;top:874px">2022-05-04 10:28:29</div>
<div class="op" style="left:2110px;top:873px">删除 <i>|</i> 修改</div>
<div class="rn" style="top:920px">17</div>
<div class="ct" style="left:28px;top:920px">26</div>
<div class="ct" style="left:96px;top:920px"><b class="z">日本快</b>3</div>
<div class="ct" style="left:312px;top:920px">3</div>
<div class="ct" style="left:500px;top:920px">c26</div>
<div class="a" style="left:772px;top:911px;line-height:0"><svg width="30" height="30" viewBox="0 0 30 30"><defs><radialGradient id="g16" cx="0.42" cy="0.38" r="0.65"><stop offset="0" stop-color="#d42a2a"/><stop offset="0.75" stop-color="#d42a2a"/><stop offset="1" stop-color="#8a0a0a"/></radialGradient></defs><circle cx="14.5" cy="13.2" r="12" fill="url(#g16)" stroke="#8a0a0a" stroke-width="0.9"/><rect x="11" y="5.5" width="7" height="3" fill="#fff" opacity="0.5"/><text x="14.5" y="17.8" text-anchor="middle" font-family="Liberation Sans" font-weight="bold" font-size="6.5" fill="#fff">B Y5</text><rect x="8.5" y="23.8" width="7" height="4" fill="#8a1a14"/><rect x="15.5" y="23.8" width="6" height="4" fill="#4a3020"/><rect x="9.3" y="24.9" width="5.4" height="1.8" fill="#e87050" opacity="0.6"/><rect x="16.2" y="24.9" width="4.6" height="1.8" fill="#f0e0c0" opacity="0.6"/></svg></div>
<div class="ct" style="left:885px;top:920px">1</div>
<div class="ct" style="left:994px;top:920px">620</div>
<div class="ct" style="left:1104px;top:920px">20</div>
<div class="ct" style="left:1292px;top:920px"><b class="z">是</b></div>
<div class="ct" style="left:1401px;top:920px">1970-01-01 08:00:00</div>
<div class="ct" style="left:1754px;top:920px">2022-05-04 10:28:43</div>
<div class="op" style="left:2110px;top:919px">删除 <i>|</i> 修改</div>
<div class="rn" style="top:966px">18</div>
<div class="ct" style="left:28px;top:966px">27</div>
<div class="ct" style="left:96px;top:966px"><b class="z">澳门快</b>3</div>
<div class="ct" style="left:312px;top:966px">3</div>
<div class="ct" style="left:500px;top:966px">c27</div>
<div class="a" style="left:772px;top:957px;line-height:0"><svg width="30" height="30" viewBox="0 0 30 30"><defs><radialGradient id="g17" cx="0.42" cy="0.38" r="0.65"><stop offset="0" stop-color="#3a84d0"/><stop offset="0.75" stop-color="#3a84d0"/><stop offset="1" stop-color="#1a4a98"/></radialGradient></defs><circle cx="14.5" cy="13.2" r="12" fill="url(#g17)" stroke="#1a4a98" stroke-width="0.9"/><rect x="11" y="5.5" width="7" height="3" fill="#fff" opacity="0.5"/><text x="14.5" y="17.8" text-anchor="middle" font-family="Liberation Sans" font-weight="bold" font-size="6.5" fill="#fff">B Y5</text><rect x="8.5" y="23.8" width="7" height="4" fill="#8a1a14"/><rect x="15.5" y="23.8" width="6" height="4" fill="#4a3020"/><rect x="9.3" y="24.9" width="5.4" height="1.8" fill="#e87050" opacity="0.6"/><rect x="16.2" y="24.9" width="4.6" height="1.8" fill="#f0e0c0" opacity="0.6"/></svg></div>
<div class="ct" style="left:885px;top:966px">1</div>
<div class="ct" style="left:994px;top:966px">620</div>
<div class="ct" style="left:1104px;top:966px">20</div>
<div class="ct" style="left:1292px;top:966px"><b class="z">是</b></div>
<div class="ct" style="left:1401px;top:966px">1970-01-01 08:00:00</div>
<div class="ct" style="left:1754px;top:966px">2022-05-04 10:28:52</div>
<div class="op" style="left:2110px;top:965px">删除 <i>|</i> 修改</div>
<div class="rn" style="top:1012px">19</div>
<div class="ct" style="left:28px;top:1012px">28</div>
<div class="ct" style="left:96px;top:1012px"><b class="z">汉城快</b>3</div>
<div class="ct" style="left:312px;top:1012px">3</div>
<div class="ct" style="left:500px;top:1012px">c28</div>
<div class="a" style="left:772px;top:1003px;line-height:0"><svg width="30" height="30" viewBox="0 0 30 30"><defs><radialGradient id="g18" cx="0.42" cy="0.38" r="0.65"><stop offset="0" stop-color="#7a3ac0"/><stop offset="0.75" stop-color="#7a3ac0"/><stop offset="1" stop-color="#4a1080"/></radialGradient></defs><circle cx="14.5" cy="13.2" r="12" fill="url(#g18)" stroke="#4a1080" stroke-width="0.9"/><rect x="11" y="5.5" width="7" height="3" fill="#fff" opacity="0.5"/><text x="14.5" y="17.8" text-anchor="middle" font-family="Liberation Sans" font-weight="bold" font-size="6.5" fill="#fff">B Y5</text><rect x="8.5" y="23.8" width="7" height="4" fill="#8a1a14"/><rect x="15.5" y="23.8" width="6" height="4" fill="#4a3020"/><rect x="9.3" y="24.9" width="5.4" height="1.8" fill="#e87050" opacity="0.6"/><rect x="16.2" y="24.9" width="4.6" height="1.8" fill="#f0e0c0" opacity="0.6"/></svg></div>
<div class="ct" style="left:885px;top:1012px">1</div>
<div class="ct" style="left:994px;top:1012px">620</div>
<div class="ct" style="left:1104px;top:1012px">20</div>
<div class="ct" style="left:1292px;top:1012px"><b class="z">是</b></div>
<div class="ct" style="left:1401px;top:1012px">1970-01-01 08:00:00</div>
<div class="ct" style="left:1754px;top:1012px">2022-05-04 10:29:04</div>
<div class="op" style="left:2110px;top:1011px">删除 <i>|</i> 修改</div>
<div class="rn" style="top:1058px">20</div>
<div class="ct" style="left:28px;top:1058px">29</div>
<div class="ct" style="left:96px;top:1058px"><b class="z">缅甸快</b>3</div>
<div class="ct" style="left:312px;top:1058px">3</div>
<div class="ct" style="left:500px;top:1058px">c29</div>
<div class="a" style="left:772px;top:1049px;line-height:0"><svg width="30" height="30" viewBox="0 0 30 30"><defs><radialGradient id="g19" cx="0.42" cy="0.38" r="0.65"><stop offset="0" stop-color="#3a94e0"/><stop offset="0.75" stop-color="#3a94e0"/><stop offset="1" stop-color="#1a58a8"/></radialGradient></defs><circle cx="14.5" cy="13.2" r="12" fill="url(#g19)" stroke="#1a58a8" stroke-width="0.9"/><rect x="11" y="5.5" width="7" height="3" fill="#fff" opacity="0.5"/><text x="14.5" y="17.8" text-anchor="middle" font-family="Liberation Sans" font-weight="bold" font-size="6.5" fill="#fff">B Y5</text><rect x="8.5" y="23.8" width="7" height="4" fill="#8a1a14"/><rect x="15.5" y="23.8" width="6" height="4" fill="#4a3020"/><rect x="9.3" y="24.9" width="5.4" height="1.8" fill="#e87050" opacity="0.6"/><rect x="16.2" y="24.9" width="4.6" height="1.8" fill="#f0e0c0" opacity="0.6"/></svg></div>
<div class="ct" style="left:885px;top:1058px">1</div>
<div class="ct" style="left:994px;top:1058px">620</div>
<div class="ct" style="left:1104px;top:1058px">20</div>
<div class="ct" style="left:1292px;top:1058px"><b class="z">是</b></div>
<div class="ct" style="left:1401px;top:1058px">1970-01-01 08:00:00</div>
<div class="ct" style="left:1754px;top:1058px">2022-05-04 10:29:15</div>
<div class="op" style="left:2110px;top:1057px">删除 <i>|</i> 修改</div>
<div class="rn" style="top:1104px">21</div>
<div class="ct" style="left:28px;top:1104px">30</div>
<div class="ct" style="left:96px;top:1104px"><b class="z">极速赛车</b></div>
<div class="ct" style="left:312px;top:1104px">10</div>
<div class="ct" style="left:500px;top:1104px">c30</div>
<div class="a" style="left:772px;top:1095px;line-height:0"><svg width="30" height="30" viewBox="0 0 30 30"><defs><radialGradient id="g20" cx="0.42" cy="0.38" r="0.65"><stop offset="0" stop-color="#f0a020"/><stop offset="0.75" stop-color="#f0a020"/><stop offset="1" stop-color="#c05a08"/></radialGradient></defs><circle cx="14.5" cy="13.2" r="12" fill="url(#g20)" stroke="#c05a08" stroke-width="0.9"/><path d="M6 14 L10 10 L13 12 L16 9 L20 12 L23 13 L23 18 L6 18 Z" fill="#5a3a08" opacity="0.8"/><rect x="8.5" y="23.8" width="7" height="4" fill="#8a1a14"/><rect x="15.5" y="23.8" width="6" height="4" fill="#4a3020"/><rect x="9.3" y="24.9" width="5.4" height="1.8" fill="#e87050" opacity="0.6"/><rect x="16.2" y="24.9" width="4.6" height="1.8" fill="#f0e0c0" opacity="0.6"/></svg></div>
<div class="ct" style="left:885px;top:1104px">2</div>
<div class="ct" style="left:994px;top:1104px">75</div>
<div class="ct" style="left:1104px;top:1104px">20</div>
<div class="ct" style="left:1292px;top:1104px"><b class="z">是</b></div>
<div class="ct" style="left:1401px;top:1104px">1970-01-01 08:00:00</div>
<div class="ct" style="left:1754px;top:1104px">2022-05-04 10:30:04</div>
<div class="op" style="left:2110px;top:1103px">删除 <i>|</i> 修改</div>
</div>
<div id="sb"></div>
</body></html>
